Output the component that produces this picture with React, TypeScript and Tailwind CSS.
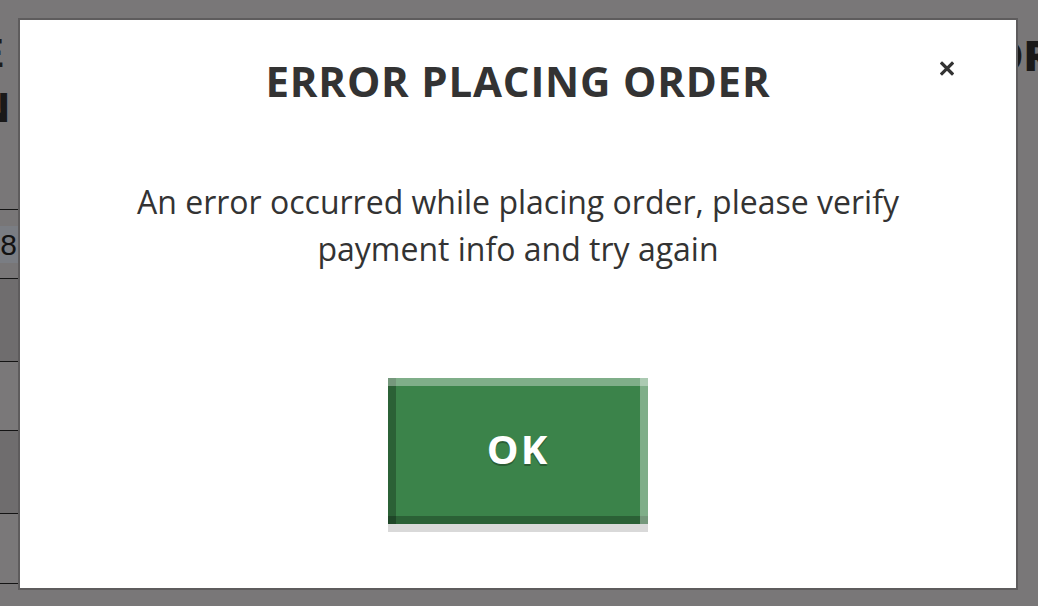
import React from "react";

export default function App() {
  return (
    <div
      className="relative w-[1038px] h-[606px] overflow-hidden bg-[#797778]"
      style={{ fontFamily: '"Open Sans", "Liberation Sans", sans-serif' }}
    >
      {/* dimmed page behind the dialog */}
      <div className="flex h-full">
        <div className="w-[18px] shrink-0 overflow-hidden flex flex-col">
          <div className="h-[209px] pt-[26px]">
            <div
              className="w-[200px] ml-[-196px] text-right font-bold text-[40px] leading-[54px] text-[#1c1b1b] whitespace-nowrap"
              style={{ fontFamily: '"Liberation Sans", sans-serif' }}
            >
              TE
            </div>
            <div className="w-[200px] ml-[-190px] text-right font-extrabold text-[40px] leading-[54px] text-[#1a1919] whitespace-nowrap">
              ON
            </div>
          </div>
          <div className="h-px bg-[#141414]" />
          <div className="h-[68px] pt-[16px] bg-[#787677]">
            <div
              className="h-[37px] bg-[#7a7d83] text-[30px] leading-[37px] text-[#121212] text-right pr-[1px]"
              style={{ fontFamily: '"Liberation Sans", sans-serif' }}
            >
              8
            </div>
          </div>
          <div className="h-px bg-[#141414]" />
          <div className="h-[82px] bg-[#6f6d6e]" />
          <div className="h-px bg-[#141414]" />
          <div className="h-[68px] bg-[#7a7879]" />
          <div className="h-px bg-[#141414]" />
          <div className="h-[82px] bg-[#6f6d6e]" />
          <div className="h-px bg-[#141414]" />
          <div className="h-[69px] bg-[#7a7879]" />
          <div className="h-px bg-[#141414]" />
          <div className="flex-1 bg-[#797778]" />
        </div>
        <div className="flex-1" />
        <div className="w-[20px] shrink-0 overflow-hidden pt-[31px]">
          <div className="ml-[-28px] whitespace-nowrap font-extrabold text-[42px] leading-[48px] text-[#1a1919]">
            ORDER
          </div>
        </div>
      </div>

      {/* dialog */}
      <div className="absolute left-[18px] top-[18px] w-[1000px] h-[572px] border-2 border-[#5e5c5d] bg-white">
        <button
          type="button"
          className="absolute right-[62px] top-[41px] w-[14px] h-[15px] text-[#333333]"
          aria-label="Close"
        >
          <svg width="14" height="15" viewBox="0 0 14 15" fill="none">
            <path
              d="M2 2.5 L12 12.5 M12 2.5 L2 12.5"
              stroke="currentColor"
              strokeWidth="3.2"
              strokeLinecap="square"
            />
          </svg>
        </button>

        <div className="flex flex-col items-center pt-[34px]">
          <h2 className="font-bold text-[42px] leading-[53px] tracking-[0.8px] text-[#333333] whitespace-nowrap">
            ERROR PLACING ORDER
          </h2>
          <p className="mt-[71px] text-[32px] leading-[47px] text-[#333333] text-center whitespace-nowrap">
            An error occurred while placing order, please verify
            <br />
            payment info and try again
          </p>
          <button
            type="button"
            className="mt-[106px] w-[260px] h-[146px] pb-[4px] bg-[#3b834a] flex items-center justify-center font-bold text-[40px] tracking-[2px] text-white shadow-[inset_0_8px_0_rgba(255,255,255,0.35),inset_-8px_0_0_rgba(255,255,255,0.35),inset_8px_0_0_rgba(0,0,0,0.26),inset_0_-8px_0_rgba(0,0,0,0.26),0_8px_0_#d9d9d9]"
            style={{ textShadow: "0 2px 0 #2b5e35" }}
          >
            OK
          </button>
        </div>
      </div>
    </div>
  );
}
